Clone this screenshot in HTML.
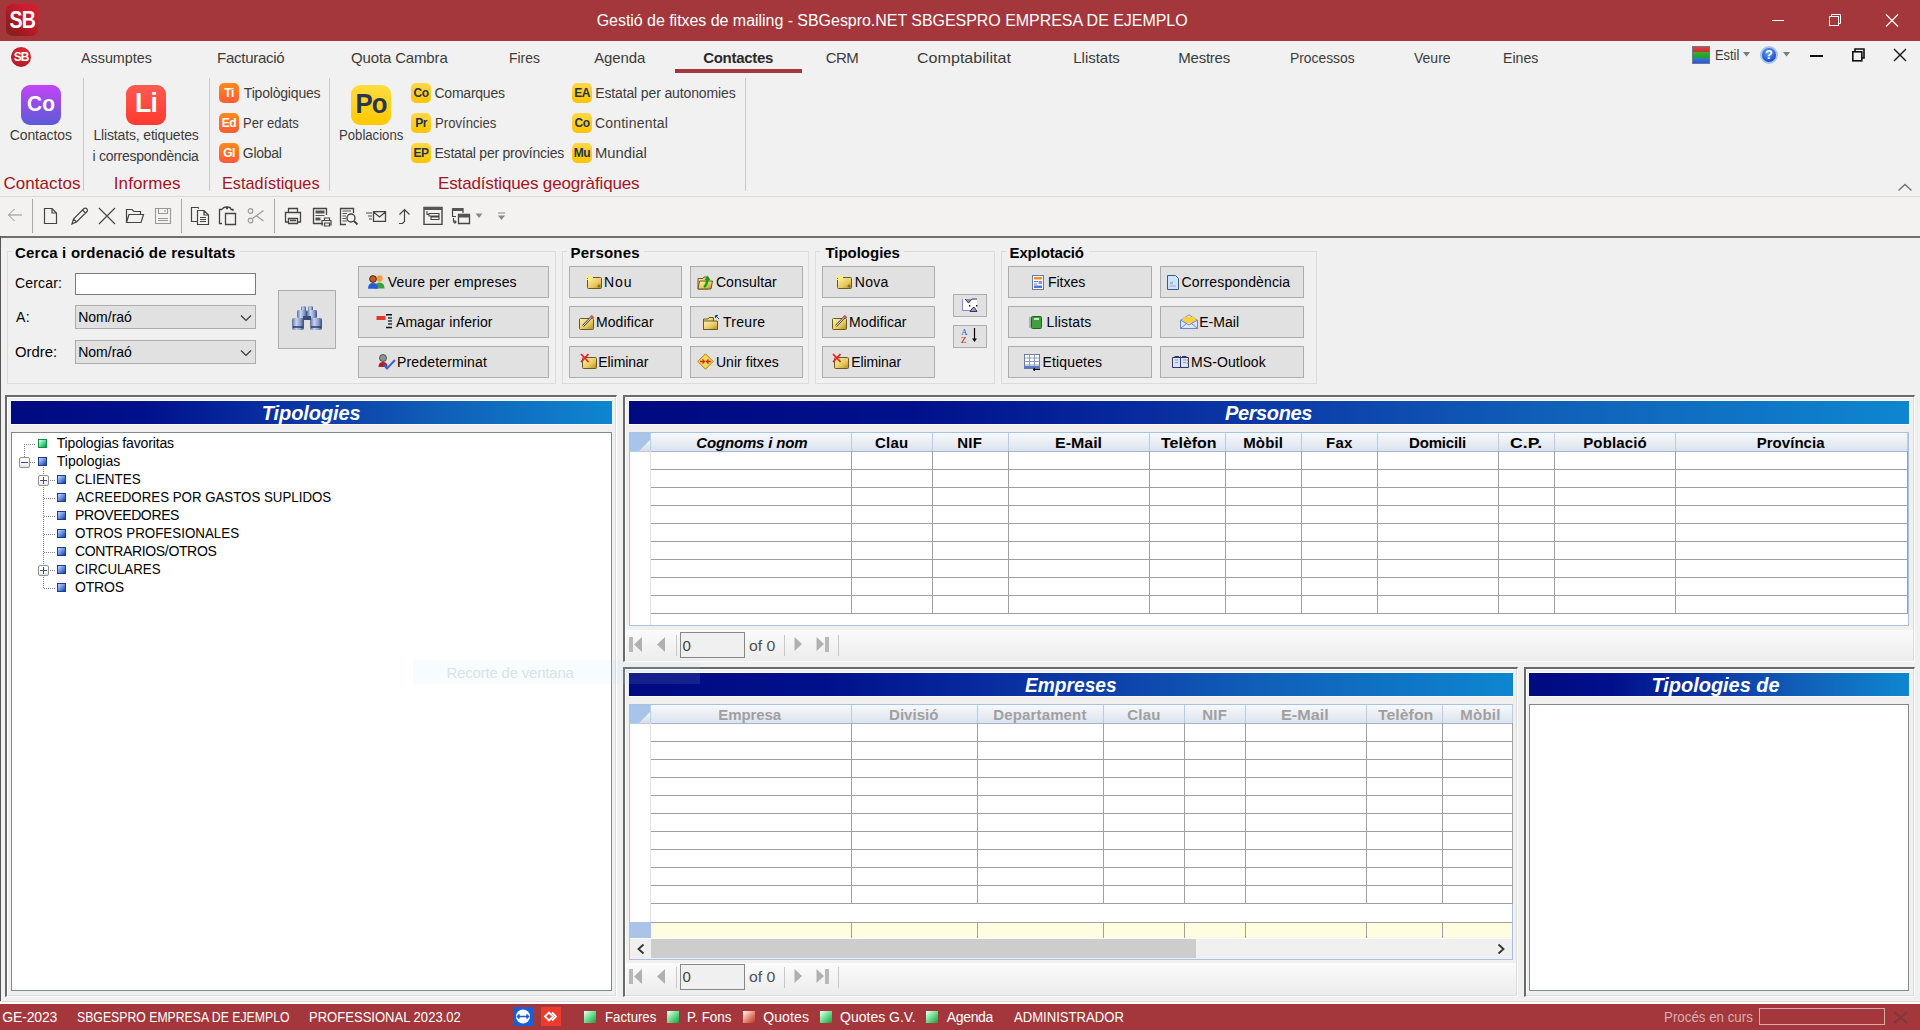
<!DOCTYPE html>
<html><head><meta charset="utf-8"><style>
html,body{margin:0;padding:0}
body{width:1920px;height:1030px;position:relative;overflow:hidden;background:#f0f0f0;font-family:"Liberation Sans",sans-serif}
.a{position:absolute;box-sizing:border-box}
.t{position:absolute;white-space:pre}
.ico{position:absolute;box-sizing:border-box;border-radius:5px;font-family:"Liberation Sans",sans-serif;font-weight:bold;text-align:center;white-space:pre}
</style></head>
<body>
<div class="a" style="left:0px;top:0px;width:1920px;height:41px;background:#a4373b"></div><div class="a" style="left:6px;top:4px;width:32px;height:32px;border-radius:7px;background:linear-gradient(45deg,#742818 0%,#a01a20 30%,#d01a2e 70%,#dc1a32 100%)"></div><div class="t" style="left:2px;top:8px;width:40px;font-size:24.5px;line-height:24px;font-weight:bold;color:#fff;letter-spacing:-1px;text-align:center;transform:scaleX(0.8);transform-origin:22px 0">SB</div><div class="a" style="left:1772px;top:20px;width:12px;height:1px;background:#fff"></div><svg class="a" style="left:1828px;top:13px" width="15" height="14" viewBox="0 0 15 14"><path d="M3.5 3.5V1.5H12.5V10.5H10.5" fill="none" stroke="#fff" stroke-width="1"/><rect x="1.5" y="3.5" width="9" height="9" fill="none" stroke="#fff" stroke-width="1"/></svg><svg class="a" style="left:1885px;top:14px" width="14" height="13" viewBox="0 0 14 13"><path d="M1 0.5L13 12.5M13 0.5L1 12.5" stroke="#fff" stroke-width="1.1"/></svg><div class="a" style="left:0px;top:41px;width:1920px;height:155px;background:#f1f1f1"></div><div class="a" style="left:11px;top:47px;width:20px;height:20px;border-radius:50%;background:radial-gradient(circle at 60% 30%,#e0283a,#a8141e)"></div><div class="t" style="left:11px;top:50px;width:20px;font-size:12px;line-height:14px;font-weight:bold;color:#fff;letter-spacing:-1px;text-align:center">SB</div><div class="a" style="left:675px;top:69px;width:127px;height:4px;background:#a4373b"></div><div class="a" style="left:1692px;top:46px;width:18px;height:18px;background:linear-gradient(#e04040 0,#c83030 33%,#30b030 33%,#20a020 66%,#3a7ae0 66%,#2a5ad0 100%);border:1px solid #6a7a8a"></div><svg class="a" style="left:1743px;top:52px" width="8" height="5" viewBox="0 0 8 5"><path d="M0 0H7L3.5 4.5Z" fill="#7a7a7a"/></svg><div class="a" style="left:1760px;top:46px;width:18px;height:18px;border-radius:50%;background:radial-gradient(circle at 45% 35%,#6aa8ff,#1a4ec8 70%);border:2px solid #a8c4ec"></div><div class="t" style="left:1760px;top:48px;width:18px;font-size:13px;line-height:14px;font-weight:bold;color:#fff;text-align:center">?</div><svg class="a" style="left:1783px;top:52px" width="8" height="5" viewBox="0 0 8 5"><path d="M0 0H7L3.5 4.5Z" fill="#7a7a7a"/></svg><div class="a" style="left:1810px;top:55px;width:13px;height:2px;background:#111"></div><svg class="a" style="left:1851px;top:48px" width="15" height="14" viewBox="0 0 15 14"><path d="M4 3V1H13V10H11" fill="none" stroke="#111" stroke-width="1.6"/><rect x="1.8" y="3.8" width="9" height="9" fill="none" stroke="#111" stroke-width="1.6"/></svg><svg class="a" style="left:1893px;top:48px" width="14" height="14" viewBox="0 0 14 14"><path d="M1 1L13 13M13 1L1 13" stroke="#111" stroke-width="1.4"/></svg><div class="a" style="left:83px;top:78px;width:1px;height:113px;background:#c8c8c8"></div><div class="a" style="left:209px;top:78px;width:1px;height:113px;background:#c8c8c8"></div><div class="a" style="left:329px;top:78px;width:1px;height:113px;background:#c8c8c8"></div><div class="a" style="left:745px;top:78px;width:1px;height:113px;background:#c8c8c8"></div><div class="a" style="left:0px;top:196px;width:1920px;height:1px;background:#d9d9d9"></div><div class="ico" style="left:21px;top:85px;width:40px;height:40px;border-radius:9px;background:linear-gradient(#c544f5,#5a5ad8)"></div><div class="t" style="left:21px;top:93.2px;width:40px;text-align:center;font-size:22px;line-height:22px;font-weight:bold;color:#fff;letter-spacing:0px;transform:scaleX(0.95);transform-origin:20px 0">Co</div><div class="ico" style="left:126px;top:85px;width:40px;height:40px;border-radius:9px;background:linear-gradient(#ff5a50,#ff3a30)"></div><div class="t" style="left:126px;top:88.8px;width:40px;text-align:center;font-size:28px;line-height:28px;font-weight:bold;color:#fff;letter-spacing:-1px;transform:scaleX(0.95);transform-origin:20px 0">Li</div><div class="ico" style="left:351px;top:85px;width:40px;height:40px;border-radius:9px;background:linear-gradient(#ffdc40,#ffc800)"></div><div class="t" style="left:351px;top:90.1px;width:40px;text-align:center;font-size:28px;line-height:28px;font-weight:bold;color:#2a3550;letter-spacing:-1px;transform:scaleX(0.92);transform-origin:20px 0">Po</div><div class="ico" style="left:219px;top:83px;width:20px;height:20px;border-radius:5px;background:linear-gradient(#ff8a1a,#ff5a38)"></div><div class="t" style="left:219px;top:86px;width:20px;text-align:center;font-size:12px;line-height:14px;font-weight:bold;color:#fff;letter-spacing:-0.5px">Ti</div><div class="ico" style="left:219px;top:113px;width:20px;height:20px;border-radius:5px;background:linear-gradient(#ff8a1a,#ff5a38)"></div><div class="t" style="left:219px;top:116px;width:20px;text-align:center;font-size:12px;line-height:14px;font-weight:bold;color:#fff;letter-spacing:-0.5px">Ed</div><div class="ico" style="left:219px;top:143px;width:20px;height:20px;border-radius:5px;background:linear-gradient(#ff8a1a,#ff5a38)"></div><div class="t" style="left:219px;top:146px;width:20px;text-align:center;font-size:12px;line-height:14px;font-weight:bold;color:#fff;letter-spacing:-0.5px">Gl</div><div class="ico" style="left:411px;top:83px;width:20px;height:20px;border-radius:5px;background:linear-gradient(#ffd84a,#ffc400)"></div><div class="t" style="left:411px;top:86px;width:20px;text-align:center;font-size:12px;line-height:14px;font-weight:bold;color:#26324d;letter-spacing:-0.5px">Co</div><div class="ico" style="left:411px;top:113px;width:20px;height:20px;border-radius:5px;background:linear-gradient(#ffd84a,#ffc400)"></div><div class="t" style="left:411px;top:116px;width:20px;text-align:center;font-size:12px;line-height:14px;font-weight:bold;color:#26324d;letter-spacing:-0.5px">Pr</div><div class="ico" style="left:411px;top:143px;width:20px;height:20px;border-radius:5px;background:linear-gradient(#ffd84a,#ffc400)"></div><div class="t" style="left:411px;top:146px;width:20px;text-align:center;font-size:12px;line-height:14px;font-weight:bold;color:#26324d;letter-spacing:-0.5px">EP</div><div class="ico" style="left:572px;top:83px;width:20px;height:20px;border-radius:5px;background:linear-gradient(#ffd84a,#ffc400)"></div><div class="t" style="left:572px;top:86px;width:20px;text-align:center;font-size:12px;line-height:14px;font-weight:bold;color:#26324d;letter-spacing:-0.5px">EA</div><div class="ico" style="left:572px;top:113px;width:20px;height:20px;border-radius:5px;background:linear-gradient(#ffd84a,#ffc400)"></div><div class="t" style="left:572px;top:116px;width:20px;text-align:center;font-size:12px;line-height:14px;font-weight:bold;color:#26324d;letter-spacing:-0.5px">Co</div><div class="ico" style="left:572px;top:143px;width:20px;height:20px;border-radius:5px;background:linear-gradient(#ffd84a,#ffc400)"></div><div class="t" style="left:572px;top:146px;width:20px;text-align:center;font-size:12px;line-height:14px;font-weight:bold;color:#26324d;letter-spacing:-0.5px">Mu</div><svg class="a" style="left:1897px;top:183px" width="16" height="9" viewBox="0 0 16 9"><path d="M1.5 7.5L8 1.5L14.5 7.5" fill="none" stroke="#707070" stroke-width="1.3"/></svg><div class="a" style="left:0px;top:197px;width:1920px;height:39px;background:#f3f2f1"></div><div class="a" style="left:32px;top:199px;width:1px;height:34px;background:#a8a8a8"></div><div class="a" style="left:181px;top:199px;width:1px;height:34px;background:#a8a8a8"></div><div class="a" style="left:274px;top:199px;width:1px;height:34px;background:#a8a8a8"></div><svg class="a" style="left:7px;top:208px" width="16" height="14" viewBox="0 0 16 14"><path d="M15 7H1.5M7.5 1L1.5 7L7.5 13" fill="none" stroke="#909090" stroke-width="1"/></svg><svg class="a" style="left:43px;top:207px" width="15" height="18" viewBox="0 0 15 18"><path d="M1.5 1.5H9L13.5 6V16.5H1.5Z M9 1.5V6H13.5" fill="none" stroke="#444" stroke-width="1.2"/></svg><svg class="a" style="left:70px;top:207px" width="19" height="19" viewBox="0 0 19 19"><path d="M2 17L3.5 12L14 1.5Q15.5 0.5 17 2Q18 3.5 17 4.5L6.5 15Z M12.5 3L15.5 6 M3.5 12L6.5 15" fill="none" stroke="#444" stroke-width="1.2"/></svg><svg class="a" style="left:98px;top:207px" width="18" height="18" viewBox="0 0 18 18"><path d="M1 1L17 17M17 1L1 17" stroke="#444" stroke-width="1.1"/></svg><svg class="a" style="left:125px;top:208px" width="20" height="16" viewBox="0 0 20 16"><path d="M1.5 14.5V1.5H7L9 3.5H15.5V6.5 M1.5 14.5L4 6.5H18.5L16 14.5Z" fill="none" stroke="#444" stroke-width="1.2"/></svg><svg class="a" style="left:154px;top:207px" width="18" height="18" viewBox="0 0 18 18"><path d="M1.5 1.5H16.5V16.5H1.5Z M4.5 1.5V6.5H13.5V1.5 M11 3V5 M4 11.5H14 M4 13.5H14" fill="none" stroke="#999" stroke-width="1.1"/></svg><svg class="a" style="left:190px;top:206px" width="20" height="20" viewBox="0 0 20 20"><path d="M7 15.5H1.5V1.5H8L9 2.5 M7.5 4.5H14L18.5 9V18.5H7.5Z M14 4.5V9H18.5 M10 11.5H16 M10 13.5H16 M10 15.5H16" fill="none" stroke="#444" stroke-width="1.2"/></svg><svg class="a" style="left:218px;top:206px" width="19" height="20" viewBox="0 0 19 20"><path d="M4 17.5H1.5V3.5H4 M4 3.5Q5 1 9 1Q13 1 13 3.5H15V5 M8 2.5H10 M7.5 7.5H17.5V18.5H7.5Z" fill="none" stroke="#444" stroke-width="1.3"/></svg><svg class="a" style="left:247px;top:208px" width="18" height="16" viewBox="0 0 18 16"><circle cx="3.5" cy="3" r="2.3" fill="none" stroke="#999" stroke-width="1.2"/><circle cx="3.5" cy="12.5" r="2.3" fill="none" stroke="#999" stroke-width="1.2"/><path d="M5.5 10.5L16.5 2.5 M9 7.5L16.5 13" stroke="#999" stroke-width="1.2"/></svg><svg class="a" style="left:284px;top:207px" width="18" height="18" viewBox="0 0 18 18"><path d="M4.5 5.5V1.5H13.5V5.5 M4.5 15H1.5V5.5H16.5V15H13.5 M4.5 11.5H13.5V16.5H4.5Z M6 13.5H12" fill="none" stroke="#444" stroke-width="1.3"/></svg><svg class="a" style="left:312px;top:207px" width="20" height="20" viewBox="0 0 20 20"><path d="M11 16.5H1.5V1.5H14.5V8" fill="none" stroke="#444" stroke-width="1.3"/><rect x="3.5" y="3.5" width="9" height="3" fill="#555"/><path d="M3.5 8.5H12.5" stroke="#555"/><rect x="3.5" y="10.5" width="5" height="3" fill="#555"/><path d="M12.5 13.5V11H17.5V13.5 M11 18H10V13.5H19V18H18 M12.5 16H17.5V19H12.5Z" fill="none" stroke="#444" stroke-width="1.2"/></svg><svg class="a" style="left:339px;top:207px" width="20" height="20" viewBox="0 0 20 20"><path d="M7 17.5H1.5V1.5H14.5V6" fill="none" stroke="#444" stroke-width="1.3"/><path d="M3.5 4H12 M3.5 6.5H8 M3.5 9H7 M3.5 11.5H7 M3.5 14H8" stroke="#555" stroke-width="1"/><circle cx="12" cy="11" r="4" fill="none" stroke="#444" stroke-width="1.4"/><path d="M15 14L18.5 17.5" stroke="#444" stroke-width="1.8"/></svg><svg class="a" style="left:366px;top:211px" width="21" height="11" viewBox="0 0 21 11"><path d="M0 2H6 M2 5H6 M3 8H6" stroke="#444" stroke-width="1"/><path d="M7.5 0.5H19.5V10.5H7.5Z M7.5 1L13.5 6L19.5 1" fill="none" stroke="#444" stroke-width="1.3"/></svg><svg class="a" style="left:398px;top:208px" width="15" height="17" viewBox="0 0 15 17"><path d="M1 15.5H4.5L6.5 13.5V2 M1.5 6.5L6.5 1.5L11.5 6.5" fill="none" stroke="#444" stroke-width="1.2"/></svg><svg class="a" style="left:423px;top:206px" width="20" height="19" viewBox="0 0 20 19"><path d="M1 1.5H19V18.5H1Z" fill="none" stroke="#444" stroke-width="1.4"/><rect x="1" y="1" width="18" height="3" fill="#555"/><path d="M4 5V8.5H6 M6 7.5H16V10H6Z M8 10.5V12.5 M8 11H16V13.5H8Z" fill="none" stroke="#444" stroke-width="1.1"/></svg><svg class="a" style="left:451px;top:207px" width="20" height="18" viewBox="0 0 20 18"><path d="M1.5 1.5H12V6 M1.5 1.5V9.5H5" fill="none" stroke="#444" stroke-width="1.2"/><rect x="1.5" y="1" width="10.5" height="3" fill="#555"/><path d="M7.5 7.5H18.5V16.5H7.5Z" fill="none" stroke="#444" stroke-width="1.3"/><rect x="7.5" y="7" width="11" height="3.5" fill="#555"/><path d="M2.5 11V15H5 M3.5 13.5L5 15L3.5 16.5" fill="none" stroke="#444" stroke-width="1.1"/></svg><svg class="a" style="left:475px;top:213px" width="8" height="6" viewBox="0 0 8 6"><path d="M0.5 0.5H7.5L4 5Z" fill="#888"/></svg><svg class="a" style="left:497px;top:212px" width="9" height="9" viewBox="0 0 9 9"><path d="M1 1H8" stroke="#888" stroke-width="1"/><path d="M1 3.5H8L4.5 8Z" fill="#888"/></svg><div class="a" style="left:0px;top:236px;width:1920px;height:2px;background:#6e6e6e"></div><div class="a" style="left:0px;top:236px;width:1px;height:765px;background:#555"></div><div class="a" style="left:7px;top:251px;width:549px;height:133px;border:1px solid #dcdcdc"></div><div class="a" style="left:12px;top:249px;width:228px;height:5px;background:#f0f0f0"></div><div class="a" style="left:562px;top:251px;width:247px;height:133px;border:1px solid #dcdcdc"></div><div class="a" style="left:567px;top:249px;width:77px;height:5px;background:#f0f0f0"></div><div class="a" style="left:815px;top:251px;width:180px;height:133px;border:1px solid #dcdcdc"></div><div class="a" style="left:820px;top:249px;width:84px;height:5px;background:#f0f0f0"></div><div class="a" style="left:1001px;top:251px;width:316px;height:133px;border:1px solid #dcdcdc"></div><div class="a" style="left:1006px;top:249px;width:83px;height:5px;background:#f0f0f0"></div><div class="a" style="left:75px;top:273px;width:181px;height:22px;background:#fff;border:1px solid #7a7a7a"></div><div class="a" style="left:75px;top:305px;width:181px;height:24px;background:#e1e1e1;border:1px solid #adadad"></div><svg class="a" style="left:240px;top:314px" width="12" height="8" viewBox="0 0 12 8"><path d="M1 1.5L6 6.5L11 1.5" fill="none" stroke="#333" stroke-width="1.1"/></svg><div class="a" style="left:75px;top:340px;width:181px;height:24px;background:#e1e1e1;border:1px solid #adadad"></div><svg class="a" style="left:240px;top:349px" width="12" height="8" viewBox="0 0 12 8"><path d="M1 1.5L6 6.5L11 1.5" fill="none" stroke="#333" stroke-width="1.1"/></svg><div class="a" style="left:278px;top:290px;width:58px;height:59px;background:#e1e1e1;border:1px solid #adadad"></div><div class="a" style="left:358px;top:266px;width:191px;height:32px;background:#e1e1e1;border:1px solid #adadad"></div><div class="a" style="left:569px;top:266px;width:113px;height:32px;background:#e1e1e1;border:1px solid #adadad"></div><div class="a" style="left:690px;top:266px;width:113px;height:32px;background:#e1e1e1;border:1px solid #adadad"></div><div class="a" style="left:822px;top:266px;width:113px;height:32px;background:#e1e1e1;border:1px solid #adadad"></div><div class="a" style="left:1008px;top:266px;width:144px;height:32px;background:#e1e1e1;border:1px solid #adadad"></div><div class="a" style="left:1160px;top:266px;width:144px;height:32px;background:#e1e1e1;border:1px solid #adadad"></div><div class="a" style="left:358px;top:306px;width:191px;height:32px;background:#e1e1e1;border:1px solid #adadad"></div><div class="a" style="left:569px;top:306px;width:113px;height:32px;background:#e1e1e1;border:1px solid #adadad"></div><div class="a" style="left:690px;top:306px;width:113px;height:32px;background:#e1e1e1;border:1px solid #adadad"></div><div class="a" style="left:822px;top:306px;width:113px;height:32px;background:#e1e1e1;border:1px solid #adadad"></div><div class="a" style="left:1008px;top:306px;width:144px;height:32px;background:#e1e1e1;border:1px solid #adadad"></div><div class="a" style="left:1160px;top:306px;width:144px;height:32px;background:#e1e1e1;border:1px solid #adadad"></div><div class="a" style="left:358px;top:346px;width:191px;height:32px;background:#e1e1e1;border:1px solid #adadad"></div><div class="a" style="left:569px;top:346px;width:113px;height:32px;background:#e1e1e1;border:1px solid #adadad"></div><div class="a" style="left:690px;top:346px;width:113px;height:32px;background:#e1e1e1;border:1px solid #adadad"></div><div class="a" style="left:822px;top:346px;width:113px;height:32px;background:#e1e1e1;border:1px solid #adadad"></div><div class="a" style="left:1008px;top:346px;width:144px;height:32px;background:#e1e1e1;border:1px solid #adadad"></div><div class="a" style="left:1160px;top:346px;width:144px;height:32px;background:#e1e1e1;border:1px solid #adadad"></div><div class="a" style="left:953px;top:294px;width:34px;height:23px;background:#e1e1e1;border:1px solid #adadad"></div><div class="a" style="left:953px;top:325px;width:34px;height:23px;background:#e1e1e1;border:1px solid #adadad"></div><div class="a" style="left:5px;top:395px;width:612px;height:602px;border-top:2px solid #6a6a6a;border-left:2px solid #6a6a6a;border-right:1px solid #fff;border-bottom:1px solid #fff"></div><div class="a" style="left:7px;top:397px;width:609px;height:599px;border-top:1px solid #fff;border-left:1px solid #fff;border-right:1px solid #dcdcdc;border-bottom:1px solid #dcdcdc"></div><div class="a" style="left:11px;top:400px;width:601px;height:25px;background:#fffaf0"></div><div class="a" style="left:11px;top:401px;width:601px;height:23px;background:linear-gradient(90deg,#000a80 0%,#00108c 22%,#0c3aa8 50%,#1060b8 72%,#0e86d0 100%)"></div><div class="a" style="left:11px;top:432px;width:601px;height:559px;background:#fff;border:1px solid #828790"></div><div class="a" style="left:623px;top:395px;width:1292px;height:267px;border-top:2px solid #6a6a6a;border-left:2px solid #6a6a6a;border-right:1px solid #fff;border-bottom:1px solid #fff"></div><div class="a" style="left:625px;top:397px;width:1289px;height:264px;border-top:1px solid #fff;border-left:1px solid #fff;border-right:1px solid #dcdcdc;border-bottom:1px solid #dcdcdc"></div><div class="a" style="left:629px;top:400px;width:1280px;height:25px;background:#fffaf0"></div><div class="a" style="left:629px;top:401px;width:1280px;height:23px;background:linear-gradient(90deg,#000a80 0%,#00108c 22%,#0c3aa8 50%,#1060b8 72%,#0e86d0 100%)"></div><div class="a" style="left:623px;top:667px;width:895px;height:330px;border-top:2px solid #6a6a6a;border-left:2px solid #6a6a6a;border-right:1px solid #fff;border-bottom:1px solid #fff"></div><div class="a" style="left:625px;top:669px;width:892px;height:327px;border-top:1px solid #fff;border-left:1px solid #fff;border-right:1px solid #dcdcdc;border-bottom:1px solid #dcdcdc"></div><div class="a" style="left:629px;top:672px;width:884px;height:25px;background:#fffaf0"></div><div class="a" style="left:629px;top:673px;width:884px;height:23px;background:linear-gradient(90deg,#000a80 0%,#00108c 22%,#0c3aa8 50%,#1060b8 72%,#0e86d0 100%)"></div><div class="a" style="left:1524px;top:667px;width:391px;height:330px;border-top:2px solid #6a6a6a;border-left:2px solid #6a6a6a;border-right:1px solid #fff;border-bottom:1px solid #fff"></div><div class="a" style="left:1526px;top:669px;width:388px;height:327px;border-top:1px solid #fff;border-left:1px solid #fff;border-right:1px solid #dcdcdc;border-bottom:1px solid #dcdcdc"></div><div class="a" style="left:1529px;top:672px;width:380px;height:25px;background:#fffaf0"></div><div class="a" style="left:1529px;top:673px;width:380px;height:23px;background:linear-gradient(90deg,#000a80 0%,#00108c 22%,#0c3aa8 50%,#1060b8 72%,#0e86d0 100%)"></div><div class="a" style="left:1529px;top:704px;width:380px;height:287px;background:#fff;border:1px solid #828790"></div><div class="a" style="left:629px;top:432px;width:1280px;height:194px;background:#fff;border:1px solid #a9c2e2"></div><div class="a" style="left:630px;top:433px;width:1278px;height:19px;background:linear-gradient(#f7f9fc,#dce3ed);border-bottom:1px solid #a0b6d0"></div><div class="a" style="left:630px;top:433px;width:21px;height:19px;background:#a8c4e8;border-right:1px solid #b4d0f6;border-bottom:1px solid #b0ccf2"></div><svg class="a" style="left:639px;top:440px" width="11" height="11" viewBox="0 0 11 11"><defs><linearGradient id="tg" x1="0" y1="0" x2="0" y2="1"><stop offset="0" stop-color="#f8f6f2"/><stop offset="1" stop-color="#dcdce0"/></linearGradient></defs><path d="M11 0V11H0Z" fill="url(#tg)"/></svg><div class="a" style="left:851px;top:433px;width:1px;height:18px;background:#b8cce6"></div><div class="a" style="left:932px;top:433px;width:1px;height:18px;background:#b8cce6"></div><div class="a" style="left:1008px;top:433px;width:1px;height:18px;background:#b8cce6"></div><div class="a" style="left:1149px;top:433px;width:1px;height:18px;background:#b8cce6"></div><div class="a" style="left:1225px;top:433px;width:1px;height:18px;background:#b8cce6"></div><div class="a" style="left:1301px;top:433px;width:1px;height:18px;background:#b8cce6"></div><div class="a" style="left:1377px;top:433px;width:1px;height:18px;background:#b8cce6"></div><div class="a" style="left:1498px;top:433px;width:1px;height:18px;background:#b8cce6"></div><div class="a" style="left:1554px;top:433px;width:1px;height:18px;background:#b8cce6"></div><div class="a" style="left:1675px;top:433px;width:1px;height:18px;background:#b8cce6"></div><div class="a" style="left:1907px;top:433px;width:1px;height:18px;background:#b8cce6"></div><div class="a" style="left:651px;top:469px;width:1257px;height:1px;background:#a0a0a0"></div><div class="a" style="left:651px;top:487px;width:1257px;height:1px;background:#a0a0a0"></div><div class="a" style="left:651px;top:505px;width:1257px;height:1px;background:#a0a0a0"></div><div class="a" style="left:651px;top:523px;width:1257px;height:1px;background:#a0a0a0"></div><div class="a" style="left:651px;top:541px;width:1257px;height:1px;background:#a0a0a0"></div><div class="a" style="left:651px;top:559px;width:1257px;height:1px;background:#a0a0a0"></div><div class="a" style="left:651px;top:577px;width:1257px;height:1px;background:#a0a0a0"></div><div class="a" style="left:651px;top:595px;width:1257px;height:1px;background:#a0a0a0"></div><div class="a" style="left:651px;top:613px;width:1257px;height:1px;background:#a0a0a0"></div><div class="a" style="left:851px;top:451px;width:1px;height:163px;background:#a0a0a0"></div><div class="a" style="left:932px;top:451px;width:1px;height:163px;background:#a0a0a0"></div><div class="a" style="left:1008px;top:451px;width:1px;height:163px;background:#a0a0a0"></div><div class="a" style="left:1149px;top:451px;width:1px;height:163px;background:#a0a0a0"></div><div class="a" style="left:1225px;top:451px;width:1px;height:163px;background:#a0a0a0"></div><div class="a" style="left:1301px;top:451px;width:1px;height:163px;background:#a0a0a0"></div><div class="a" style="left:1377px;top:451px;width:1px;height:163px;background:#a0a0a0"></div><div class="a" style="left:1498px;top:451px;width:1px;height:163px;background:#a0a0a0"></div><div class="a" style="left:1554px;top:451px;width:1px;height:163px;background:#a0a0a0"></div><div class="a" style="left:1675px;top:451px;width:1px;height:163px;background:#a0a0a0"></div><div class="a" style="left:1907px;top:451px;width:1px;height:163px;background:#a0a0a0"></div><div class="a" style="left:650px;top:451px;width:1px;height:174px;background:#e2e2e2"></div><div class="a" style="left:629px;top:704px;width:884px;height:256px;background:#fff;border:1px solid #a9c2e2"></div><div class="a" style="left:630px;top:705px;width:882px;height:19px;background:linear-gradient(#f7f9fc,#dce3ed);border-bottom:1px solid #a0b6d0"></div><div class="a" style="left:630px;top:705px;width:21px;height:19px;background:#a8c4e8;border-right:1px solid #b4d0f6;border-bottom:1px solid #b0ccf2"></div><svg class="a" style="left:639px;top:712px" width="11" height="11" viewBox="0 0 11 11"><defs><linearGradient id="tg" x1="0" y1="0" x2="0" y2="1"><stop offset="0" stop-color="#f8f6f2"/><stop offset="1" stop-color="#dcdce0"/></linearGradient></defs><path d="M11 0V11H0Z" fill="url(#tg)"/></svg><div class="a" style="left:851px;top:705px;width:1px;height:18px;background:#b8cce6"></div><div class="a" style="left:977px;top:705px;width:1px;height:18px;background:#b8cce6"></div><div class="a" style="left:1103px;top:705px;width:1px;height:18px;background:#b8cce6"></div><div class="a" style="left:1184px;top:705px;width:1px;height:18px;background:#b8cce6"></div><div class="a" style="left:1245px;top:705px;width:1px;height:18px;background:#b8cce6"></div><div class="a" style="left:1366px;top:705px;width:1px;height:18px;background:#b8cce6"></div><div class="a" style="left:1442px;top:705px;width:1px;height:18px;background:#b8cce6"></div><div class="a" style="left:1512px;top:705px;width:1px;height:18px;background:#b8cce6"></div><div class="a" style="left:651px;top:741px;width:862px;height:1px;background:#a0a0a0"></div><div class="a" style="left:651px;top:759px;width:862px;height:1px;background:#a0a0a0"></div><div class="a" style="left:651px;top:777px;width:862px;height:1px;background:#a0a0a0"></div><div class="a" style="left:651px;top:795px;width:862px;height:1px;background:#a0a0a0"></div><div class="a" style="left:651px;top:813px;width:862px;height:1px;background:#a0a0a0"></div><div class="a" style="left:651px;top:831px;width:862px;height:1px;background:#a0a0a0"></div><div class="a" style="left:651px;top:849px;width:862px;height:1px;background:#a0a0a0"></div><div class="a" style="left:651px;top:867px;width:862px;height:1px;background:#a0a0a0"></div><div class="a" style="left:651px;top:885px;width:862px;height:1px;background:#a0a0a0"></div><div class="a" style="left:651px;top:903px;width:862px;height:1px;background:#a0a0a0"></div><div class="a" style="left:851px;top:723px;width:1px;height:181px;background:#a0a0a0"></div><div class="a" style="left:977px;top:723px;width:1px;height:181px;background:#a0a0a0"></div><div class="a" style="left:1103px;top:723px;width:1px;height:181px;background:#a0a0a0"></div><div class="a" style="left:1184px;top:723px;width:1px;height:181px;background:#a0a0a0"></div><div class="a" style="left:1245px;top:723px;width:1px;height:181px;background:#a0a0a0"></div><div class="a" style="left:1366px;top:723px;width:1px;height:181px;background:#a0a0a0"></div><div class="a" style="left:1442px;top:723px;width:1px;height:181px;background:#a0a0a0"></div><div class="a" style="left:1512px;top:723px;width:1px;height:181px;background:#a0a0a0"></div><div class="a" style="left:650px;top:723px;width:1px;height:236px;background:#e2e2e2"></div><div class="a" style="left:651px;top:922px;width:861px;height:16px;background:#fffde0;border-top:1px solid #a0a0a0"></div><div class="a" style="left:851px;top:922px;width:1px;height:16px;background:#a0a0a0"></div><div class="a" style="left:977px;top:922px;width:1px;height:16px;background:#a0a0a0"></div><div class="a" style="left:1103px;top:922px;width:1px;height:16px;background:#a0a0a0"></div><div class="a" style="left:1184px;top:922px;width:1px;height:16px;background:#a0a0a0"></div><div class="a" style="left:1245px;top:922px;width:1px;height:16px;background:#a0a0a0"></div><div class="a" style="left:1366px;top:922px;width:1px;height:16px;background:#a0a0a0"></div><div class="a" style="left:1442px;top:922px;width:1px;height:16px;background:#a0a0a0"></div><div class="a" style="left:630px;top:922px;width:21px;height:16px;background:#a9c4e8"></div><div class="a" style="left:630px;top:938px;width:882px;height:21px;background:#f0f0f0;border-top:1px solid #fff"></div><div class="a" style="left:651px;top:939px;width:545px;height:19px;background:#cdcdcd"></div><svg class="a" style="left:636px;top:943px" width="10" height="12" viewBox="0 0 10 12"><path d="M7.5 1.5L2.5 6L7.5 10.5" fill="none" stroke="#333" stroke-width="1.8"/></svg><svg class="a" style="left:1496px;top:943px" width="10" height="12" viewBox="0 0 10 12"><path d="M2.5 1.5L7.5 6L2.5 10.5" fill="none" stroke="#333" stroke-width="1.8"/></svg><div class="a" style="left:626px;top:630px;width:1287px;height:31px;background:linear-gradient(#fbfbfb,#ececec)"></div><svg class="a" style="left:629px;top:637px" width="14" height="16" viewBox="0 0 14 16"><defs><linearGradient id="ng" x1="0" x2="1"><stop offset="0" stop-color="#c4c4c4"/><stop offset="1" stop-color="#a0a0a0"/></linearGradient></defs><rect x="0" y="0" width="4" height="15" fill="#b8b8b8"/><path d="M13 0V15L5 7.5Z" fill="#b0b0b0"/></svg><svg class="a" style="left:656px;top:637px" width="10" height="16" viewBox="0 0 10 16"><path d="M9 0V15L1 7.5Z" fill="#b0b0b0"/></svg><div class="a" style="left:676px;top:635px;width:1px;height:21px;background:#c8c8c8"></div><div class="a" style="left:680px;top:632px;width:65px;height:26px;background:#f0f0f0;border:1px solid #888"></div><div class="a" style="left:784px;top:635px;width:1px;height:21px;background:#c8c8c8"></div><svg class="a" style="left:794px;top:637px" width="9" height="16" viewBox="0 0 9 16"><path d="M0.5 0V14L8 7Z" fill="#b0b0b0"/></svg><svg class="a" style="left:816px;top:637px" width="14" height="16" viewBox="0 0 14 16"><path d="M0.5 0V14L8 7Z" fill="#b0b0b0"/><rect x="9" y="0" width="4" height="15" fill="#b8b8b8"/></svg><div class="a" style="left:838px;top:635px;width:1px;height:21px;background:#c8c8c8"></div><div class="a" style="left:626px;top:963px;width:890px;height:32px;background:linear-gradient(#fbfbfb,#ececec)"></div><svg class="a" style="left:629px;top:969px" width="14" height="16" viewBox="0 0 14 16"><defs><linearGradient id="ng" x1="0" x2="1"><stop offset="0" stop-color="#c4c4c4"/><stop offset="1" stop-color="#a0a0a0"/></linearGradient></defs><rect x="0" y="0" width="4" height="15" fill="#b8b8b8"/><path d="M13 0V15L5 7.5Z" fill="#b0b0b0"/></svg><svg class="a" style="left:656px;top:969px" width="10" height="16" viewBox="0 0 10 16"><path d="M9 0V15L1 7.5Z" fill="#b0b0b0"/></svg><div class="a" style="left:676px;top:967px;width:1px;height:21px;background:#c8c8c8"></div><div class="a" style="left:680px;top:964px;width:65px;height:26px;background:#f0f0f0;border:1px solid #888"></div><div class="a" style="left:784px;top:967px;width:1px;height:21px;background:#c8c8c8"></div><svg class="a" style="left:794px;top:969px" width="9" height="16" viewBox="0 0 9 16"><path d="M0.5 0V14L8 7Z" fill="#b0b0b0"/></svg><svg class="a" style="left:816px;top:969px" width="14" height="16" viewBox="0 0 14 16"><path d="M0.5 0V14L8 7Z" fill="#b0b0b0"/><rect x="9" y="0" width="4" height="15" fill="#b8b8b8"/></svg><div class="a" style="left:838px;top:967px;width:1px;height:21px;background:#c8c8c8"></div><div class="a" style="left:24px;top:444px;width:12px;height:1px;background:repeating-linear-gradient(90deg,#808080 0 1px,transparent 1px 2px)"></div><div class="a" style="left:24px;top:444px;width:1px;height:13px;background:repeating-linear-gradient(180deg,#808080 0 1px,transparent 1px 2px)"></div><div class="a" style="left:30px;top:462px;width:6px;height:1px;background:repeating-linear-gradient(90deg,#808080 0 1px,transparent 1px 2px)"></div><div class="a" style="left:19px;top:457px;width:11px;height:11px;background:linear-gradient(#fff 45%,#e4e4e4);border:1px solid #919191;border-radius:2px"></div><div class="a" style="left:21px;top:462px;width:7px;height:1px;background:#3a4c98"></div><div class="a" style="left:43px;top:467px;width:1px;height:122px;background:repeating-linear-gradient(180deg,#808080 0 1px,transparent 1px 2px)"></div><div class="a" style="left:44px;top:480px;width:11px;height:1px;background:repeating-linear-gradient(90deg,#808080 0 1px,transparent 1px 2px)"></div><div class="a" style="left:44px;top:498px;width:11px;height:1px;background:repeating-linear-gradient(90deg,#808080 0 1px,transparent 1px 2px)"></div><div class="a" style="left:44px;top:516px;width:11px;height:1px;background:repeating-linear-gradient(90deg,#808080 0 1px,transparent 1px 2px)"></div><div class="a" style="left:44px;top:534px;width:11px;height:1px;background:repeating-linear-gradient(90deg,#808080 0 1px,transparent 1px 2px)"></div><div class="a" style="left:44px;top:552px;width:11px;height:1px;background:repeating-linear-gradient(90deg,#808080 0 1px,transparent 1px 2px)"></div><div class="a" style="left:44px;top:570px;width:11px;height:1px;background:repeating-linear-gradient(90deg,#808080 0 1px,transparent 1px 2px)"></div><div class="a" style="left:44px;top:588px;width:11px;height:1px;background:repeating-linear-gradient(90deg,#808080 0 1px,transparent 1px 2px)"></div><div class="a" style="left:38px;top:475px;width:11px;height:11px;background:linear-gradient(#fff 45%,#e4e4e4);border:1px solid #919191;border-radius:2px"></div><div class="a" style="left:40px;top:480px;width:7px;height:1px;background:#3a4c98"></div><div class="a" style="left:43px;top:477px;width:1px;height:7px;background:#3a4c98"></div><div class="a" style="left:38px;top:565px;width:11px;height:11px;background:linear-gradient(#fff 45%,#e4e4e4);border:1px solid #919191;border-radius:2px"></div><div class="a" style="left:40px;top:570px;width:7px;height:1px;background:#3a4c98"></div><div class="a" style="left:43px;top:567px;width:1px;height:7px;background:#3a4c98"></div><div class="a" style="left:38px;top:439px;width:9px;height:9px;background:linear-gradient(135deg,#d8fff0 0%,#60d8a0 50%,#109040 100%);border:1px solid #109040"></div><div class="a" style="left:38px;top:457px;width:9px;height:9px;background:linear-gradient(135deg,#c8d8ff 0%,#6a90e0 50%,#1a3aa0 100%);border:1px solid #1a3aa0"></div><div class="a" style="left:57px;top:475px;width:9px;height:9px;background:linear-gradient(135deg,#c8d8ff 0%,#6a90e0 50%,#1a3aa0 100%);border:1px solid #1a3aa0"></div><div class="a" style="left:57px;top:493px;width:9px;height:9px;background:linear-gradient(135deg,#c8d8ff 0%,#6a90e0 50%,#1a3aa0 100%);border:1px solid #1a3aa0"></div><div class="a" style="left:57px;top:511px;width:9px;height:9px;background:linear-gradient(135deg,#c8d8ff 0%,#6a90e0 50%,#1a3aa0 100%);border:1px solid #1a3aa0"></div><div class="a" style="left:57px;top:529px;width:9px;height:9px;background:linear-gradient(135deg,#c8d8ff 0%,#6a90e0 50%,#1a3aa0 100%);border:1px solid #1a3aa0"></div><div class="a" style="left:57px;top:547px;width:9px;height:9px;background:linear-gradient(135deg,#c8d8ff 0%,#6a90e0 50%,#1a3aa0 100%);border:1px solid #1a3aa0"></div><div class="a" style="left:57px;top:565px;width:9px;height:9px;background:linear-gradient(135deg,#c8d8ff 0%,#6a90e0 50%,#1a3aa0 100%);border:1px solid #1a3aa0"></div><div class="a" style="left:57px;top:583px;width:9px;height:9px;background:linear-gradient(135deg,#c8d8ff 0%,#6a90e0 50%,#1a3aa0 100%);border:1px solid #1a3aa0"></div><div class="a" style="left:0px;top:1004px;width:1920px;height:26px;background:#a4373b"></div><div class="a" style="left:2px;top:997px;width:1918px;height:4px;background:#f0f0f0"></div><div class="a" style="left:0px;top:1001px;width:1920px;height:1px;background:#dcdcdc"></div><div class="a" style="left:0px;top:1002px;width:1920px;height:2px;background:#fff"></div><div class="a" style="left:513px;top:1007px;width:20px;height:19px;background:#1560d8"></div><svg class="a" style="left:513px;top:1007px" width="20" height="19" viewBox="0 0 20 19"><circle cx="10" cy="9.5" r="7" fill="#fff"/><path d="M4.5 9.5H15.5 M6.5 7.5L4.5 9.5L6.5 11.5 M13.5 7.5L15.5 9.5L13.5 11.5" fill="none" stroke="#1560d8" stroke-width="1.6"/></svg><div class="a" style="left:541px;top:1007px;width:20px;height:19px;background:#ef3b2d"></div><svg class="a" style="left:541px;top:1007px" width="20" height="19" viewBox="0 0 20 19"><path d="M4 9.5L8 5.5L12 9.5L8 13.5Z M11 5.5L15 9.5L11 13.5" fill="none" stroke="#fff" stroke-width="1.8"/></svg><div class="a" style="left:584px;top:1011px;width:12px;height:12px;background:linear-gradient(135deg,#fff 0%,#7ee8a0 40%,#1a9a40 100%)"></div><div class="a" style="left:667px;top:1011px;width:12px;height:12px;background:linear-gradient(135deg,#fff 0%,#7ee8a0 40%,#1a9a40 100%)"></div><div class="a" style="left:820px;top:1011px;width:12px;height:12px;background:linear-gradient(135deg,#fff 0%,#7ee8a0 40%,#1a9a40 100%)"></div><div class="a" style="left:926px;top:1011px;width:12px;height:12px;background:linear-gradient(135deg,#fff 0%,#7ee8a0 40%,#1a9a40 100%)"></div><div class="a" style="left:743px;top:1011px;width:12px;height:12px;background:linear-gradient(135deg,#fff 0%,#f0a090 40%,#b83020 100%)"></div><div class="a" style="left:1759px;top:1008px;width:126px;height:17px;border:1px solid #d8a8aa"></div><svg class="a" style="left:1893px;top:1011px" width="15" height="13" viewBox="0 0 15 13"><path d="M1 1L14 12M14 1L1 12" stroke="#7a3a3c" stroke-width="2"/></svg><svg class="a" style="left:292px;top:306px" width="30" height="25" viewBox="0 0 30 25"><defs><linearGradient id="bn" x1="0" x2="1"><stop offset="0" stop-color="#5a6c98"/><stop offset="0.35" stop-color="#c8d4f0"/><stop offset="0.7" stop-color="#8aa0d0"/><stop offset="1" stop-color="#3a4a78"/></linearGradient></defs><rect x="9" y="0" width="5" height="5" rx="1.5" fill="url(#bn)"/><rect x="16" y="0" width="5" height="5" rx="1.5" fill="url(#bn)"/><rect x="5" y="4" width="10" height="8" rx="1.5" fill="url(#bn)"/><rect x="15" y="4" width="10" height="8" rx="1.5" fill="url(#bn)"/><rect x="0" y="12" width="12" height="12" rx="2" fill="url(#bn)"/><rect x="18" y="12" width="12" height="12" rx="2" fill="url(#bn)"/><rect x="11" y="10" width="8" height="4" fill="#3a4a78"/><path d="M1 21H11 M19 21H29" stroke="#2a3a68" stroke-width="1.5"/></svg><svg class="a" style="left:368px;top:275px" width="17" height="14" viewBox="0 0 17 14"><circle cx="11.5" cy="3.5" r="3.2" fill="#f0a040"/><path d="M6.5 13.5Q6.5 7.5 11.5 7.5Q16.5 7.5 16.5 13.5Z" fill="#3aa040"/><circle cx="5" cy="4" r="3.4" fill="#d05818" stroke="#202020" stroke-width="0.8"/><path d="M0 13.8Q0 8 5 8Q10 8 10 13.8Z" fill="#2a5ad8"/></svg><svg class="a" style="left:376px;top:314px" width="17" height="15" viewBox="0 0 17 15"><rect x="0.5" y="2" width="9" height="4" fill="#e03a2a"/><path d="M10 0.8H16 M12 4H16 M12 7H16 M12 10H16 M10 13.5H16" stroke="#111" stroke-width="1.4"/><path d="M12 4H16 M12 7H16 M12 10H16" stroke="#6a7aa0" stroke-width="1.2"/></svg><svg class="a" style="left:378px;top:354px" width="18" height="16" viewBox="0 0 18 16"><circle cx="5" cy="4" r="3.5" fill="#909090" stroke="#404040" stroke-width="0.8"/><path d="M0.5 13Q0.5 8 5 8Q9.5 8 9.5 13Z" fill="#b02028"/><path d="M6 11L9 14.5L17 6" fill="none" stroke="#3a64d0" stroke-width="2"/></svg><svg class="a" style="left:586px;top:274px" width="17" height="16" viewBox="0 0 17 16"><defs><linearGradient id="fy" x1="0" y1="0" x2="1" y2="1"><stop offset="0" stop-color="#fff4b0"/><stop offset="0.6" stop-color="#e8c860"/><stop offset="1" stop-color="#b08a20"/></linearGradient></defs><rect x="1.5" y="3.5" width="14" height="11" rx="1" fill="url(#fy)" stroke="#6a5a20" stroke-width="1"/><circle cx="13" cy="12" r="1" fill="none" stroke="#5a4a20" stroke-width="0.7"/><path d="M3.5 0V7 M0 3.5H7 M1 1L6 6 M6 1L1 6" stroke="#fff060" stroke-width="1"/></svg><svg class="a" style="left:836px;top:274px" width="17" height="16" viewBox="0 0 17 16"><defs><linearGradient id="fy" x1="0" y1="0" x2="1" y2="1"><stop offset="0" stop-color="#fff4b0"/><stop offset="0.6" stop-color="#e8c860"/><stop offset="1" stop-color="#b08a20"/></linearGradient></defs><rect x="1.5" y="3.5" width="14" height="11" rx="1" fill="url(#fy)" stroke="#6a5a20" stroke-width="1"/><circle cx="13" cy="12" r="1" fill="none" stroke="#5a4a20" stroke-width="0.7"/><path d="M3.5 0V7 M0 3.5H7 M1 1L6 6 M6 1L1 6" stroke="#fff060" stroke-width="1"/></svg><svg class="a" style="left:579px;top:315px" width="16" height="15" viewBox="0 0 16 15"><defs><linearGradient id="fy" x1="0" y1="0" x2="1" y2="1"><stop offset="0" stop-color="#fff4b0"/><stop offset="0.6" stop-color="#e8c860"/><stop offset="1" stop-color="#b08a20"/></linearGradient></defs><rect x="0.5" y="3.5" width="14" height="11" rx="1" fill="url(#fy)" stroke="#6a5a20" stroke-width="1"/><path d="M4 11L13 1.5" stroke="#404040" stroke-width="2.2"/><path d="M4 11L13 1.5" stroke="#f0f0f0" stroke-width="1"/><path d="M12 0.5L14.5 3" stroke="#d05050" stroke-width="2"/></svg><svg class="a" style="left:832px;top:315px" width="16" height="15" viewBox="0 0 16 15"><defs><linearGradient id="fy" x1="0" y1="0" x2="1" y2="1"><stop offset="0" stop-color="#fff4b0"/><stop offset="0.6" stop-color="#e8c860"/><stop offset="1" stop-color="#b08a20"/></linearGradient></defs><rect x="0.5" y="3.5" width="14" height="11" rx="1" fill="url(#fy)" stroke="#6a5a20" stroke-width="1"/><path d="M4 11L13 1.5" stroke="#404040" stroke-width="2.2"/><path d="M4 11L13 1.5" stroke="#f0f0f0" stroke-width="1"/><path d="M12 0.5L14.5 3" stroke="#d05050" stroke-width="2"/></svg><svg class="a" style="left:580px;top:353px" width="17" height="17" viewBox="0 0 17 17"><defs><linearGradient id="fy" x1="0" y1="0" x2="1" y2="1"><stop offset="0" stop-color="#fff4b0"/><stop offset="0.6" stop-color="#e8c860"/><stop offset="1" stop-color="#b08a20"/></linearGradient></defs><rect x="2.5" y="4.5" width="14" height="11" rx="1" fill="url(#fy)" stroke="#6a5a20" stroke-width="1"/><path d="M1 1L8.5 9 M8.5 1L1 9" stroke="#f02020" stroke-width="1.8"/></svg><svg class="a" style="left:832px;top:353px" width="17" height="17" viewBox="0 0 17 17"><defs><linearGradient id="fy" x1="0" y1="0" x2="1" y2="1"><stop offset="0" stop-color="#fff4b0"/><stop offset="0.6" stop-color="#e8c860"/><stop offset="1" stop-color="#b08a20"/></linearGradient></defs><rect x="2.5" y="4.5" width="14" height="11" rx="1" fill="url(#fy)" stroke="#6a5a20" stroke-width="1"/><path d="M1 1L8.5 9 M8.5 1L1 9" stroke="#f02020" stroke-width="1.8"/></svg><svg class="a" style="left:697px;top:274px" width="17" height="16" viewBox="0 0 17 16"><defs><linearGradient id="fy" x1="0" y1="0" x2="1" y2="1"><stop offset="0" stop-color="#fff4b0"/><stop offset="0.6" stop-color="#e8c860"/><stop offset="1" stop-color="#b08a20"/></linearGradient></defs><path d="M1 4.5H6L7 3H11V15H1Z" fill="url(#fy)" stroke="#6a5a20" stroke-width="1"/><path d="M1 15L2.5 7H15.5L14 15Z" fill="url(#fy)" stroke="#6a5a20" stroke-width="1"/><path d="M7 13Q10 11 10.5 5" fill="none" stroke="#10a020" stroke-width="2.5"/><path d="M7.5 6L10.5 1.5L13.5 6Z" fill="#10a020"/></svg><svg class="a" style="left:703px;top:314px" width="17" height="16" viewBox="0 0 17 16"><defs><linearGradient id="fy" x1="0" y1="0" x2="1" y2="1"><stop offset="0" stop-color="#fff4b0"/><stop offset="0.6" stop-color="#e8c860"/><stop offset="1" stop-color="#b08a20"/></linearGradient></defs><path d="M0.5 5H5L6 3.5H10.5V15.5H0.5Z" fill="url(#fy)" stroke="#6a5a20" stroke-width="1"/><path d="M0.5 15.5V7H14.5V15.5Z" fill="url(#fy)" stroke="#6a5a20" stroke-width="1"/><path d="M16 5L12.5 1.5 M12.5 1.5V4 M12.5 1.5H15" stroke="#203a90" stroke-width="1"/></svg><svg class="a" style="left:697px;top:353px" width="17" height="17" viewBox="0 0 17 17"><path d="M8.5 0.8L16.2 8.5L8.5 16.2L0.8 8.5Z" fill="#f8d850" stroke="#a08020" stroke-width="1"/><path d="M3 8.5H7 M10 8.5H14" stroke="#e02020" stroke-width="1.6"/><path d="M5.5 6.5L7.5 8.5L5.5 10.5 M11.5 6.5L9.5 8.5L11.5 10.5" fill="none" stroke="#e02020" stroke-width="1.2"/></svg><svg class="a" style="left:962px;top:298px" width="16" height="14" viewBox="0 0 16 14"><path d="M0.5 1V12.5H9" fill="none" stroke="#8a8ad0" stroke-width="1"/><rect x="1" y="1" width="14" height="11" fill="#fff"/><path d="M3 1L6.5 5L10 1" fill="#909090" stroke="#30307a" stroke-width="1"/><path d="M8 13.5L11 9.5H12.5L15 13.5Z" fill="#a0a0a0" stroke="#30307a" stroke-width="1"/><path d="M10 1H15" stroke="#5a7a9a" stroke-width="1.5"/><rect x="7" y="7" width="1.4" height="1.6" fill="#222"/><rect x="14" y="7" width="1.4" height="1.6" fill="#222"/></svg><svg class="a" style="left:961px;top:327px" width="16" height="17" viewBox="0 0 16 17"><text x="0" y="7.5" font-family="Liberation Serif" font-size="9" fill="#2a4ac0">A</text><text x="0" y="16" font-family="Liberation Serif" font-size="9" fill="#b02020">Z</text><path d="M13.5 1V14" stroke="#000" stroke-width="1.2"/><path d="M11 11.5L13.5 15L16 11.5Z" fill="#000"/></svg><svg class="a" style="left:1032px;top:275px" width="12" height="15" viewBox="0 0 12 15"><rect x="0.5" y="0.5" width="11" height="14" fill="#fff" stroke="#6a7aa0"/><rect x="2" y="2" width="8" height="2.5" fill="#ff8a20"/><path d="M2 6.5H6 M2 9H5" stroke="#5a7ac8" stroke-width="1.2"/><rect x="6.5" y="6" width="3.5" height="3" fill="#7a9ae0"/><rect x="2" y="10.5" width="8" height="2.5" fill="#4a7ad8"/></svg><svg class="a" style="left:1167px;top:275px" width="12" height="15" viewBox="0 0 12 15"><path d="M0.5 0.5H8.5L11.5 3.5V14.5H0.5Z" fill="#cfe4fa" stroke="#3a5a90"/><path d="M3 7L6 9M6 7L3 9 M2.5 11H9" stroke="#8aa0c0" stroke-width="0.8"/></svg><svg class="a" style="left:1029px;top:316px" width="13" height="13" viewBox="0 0 13 13"><rect x="2.5" y="0.5" width="10" height="12" rx="1" fill="#40a040" stroke="#206020"/><rect x="5" y="2" width="5" height="2" fill="#c0e8c0"/><path d="M1 1.5V12" stroke="#606060" stroke-width="1.5" stroke-dasharray="1 1"/></svg><svg class="a" style="left:1180px;top:314px" width="18" height="15" viewBox="0 0 18 15"><path d="M1 6L9 0.8L17 6" fill="#f8e0a0" stroke="#8a94c0" stroke-width="1"/><rect x="3" y="3" width="12" height="6" fill="#f8d040"/><path d="M0.5 6V14.5H17.5V6L9 11Z" fill="#dce8fa" stroke="#6a84c8" stroke-width="1"/><path d="M0.5 14.5L7 9 M17.5 14.5L11 9" stroke="#6a84c8" stroke-width="1"/></svg><svg class="a" style="left:1024px;top:354px" width="17" height="17" viewBox="0 0 17 17"><rect x="0.5" y="0.5" width="15" height="14" fill="#fff" stroke="#6a7a9a"/><path d="M0.5 4H15.5 M0.5 7.5H15.5 M0.5 11H15.5 M5.5 0.5V14.5 M10.5 0.5V14.5" stroke="#8a9ac0" stroke-width="1"/><rect x="0.5" y="12" width="15" height="2.5" fill="#5a7ac8"/><path d="M9 15.5H16 M11 14L9 15.5L11 17" stroke="#000" stroke-width="1" fill="none"/></svg><svg class="a" style="left:1172px;top:355px" width="17" height="13" viewBox="0 0 17 13"><path d="M0.5 2.5H16.5V12.5H0.5Z" fill="#dce4f4" stroke="#2a3a6a"/><path d="M8.5 1V12.5" stroke="#2a3a6a"/><path d="M2.5 1.5H7 M10 1.5H14.5" stroke="#2a3a6a"/><path d="M3 5H6 M3 7.5H6 M11 5H14 M11 7.5H14" stroke="#7a8ac0" stroke-width="0.8"/><path d="M15.5 4V6 M15.5 7V9" stroke="#e0a020" stroke-width="1.5"/></svg>
<div class="t" style="left:596.7px;top:12.7px;font-size:16px;line-height:16px;color:#ffffff;letter-spacing:-0.04px">Gestió de fitxes de mailing - SBGespro.NET SBGESPRO EMPRESA DE EJEMPLO</div>
<div class="t" style="left:81.2px;top:50.0px;font-size:15px;line-height:15px;color:#3b3b3b;transform:scaleX(0.9554);transform-origin:0 0">Assumptes</div>
<div class="t" style="left:217.0px;top:50.0px;font-size:15px;line-height:15px;color:#3b3b3b;letter-spacing:-0.26px">Facturació</div>
<div class="t" style="left:351.0px;top:50.0px;font-size:15px;line-height:15px;color:#3b3b3b;letter-spacing:-0.15px">Quota Cambra</div>
<div class="t" style="left:509.3px;top:50.0px;font-size:15px;line-height:15px;color:#3b3b3b;transform:scaleX(0.9250);transform-origin:0 0">Fires</div>
<div class="t" style="left:594.2px;top:50.0px;font-size:15px;line-height:15px;color:#3b3b3b;letter-spacing:-0.12px">Agenda</div>
<div class="t" style="left:703.2px;top:50.0px;font-size:15px;line-height:15px;color:#2b2b2b;font-weight:bold;letter-spacing:-0.28px">Contactes</div>
<div class="t" style="left:825.8px;top:50.0px;font-size:15px;line-height:15px;color:#3b3b3b;letter-spacing:-0.60px">CRM</div>
<div class="t" style="left:916.9px;top:50.0px;font-size:15px;line-height:15px;color:#3b3b3b;transform:scaleX(1.0721);transform-origin:0 0">Comptabilitat</div>
<div class="t" style="left:1073.3px;top:50.0px;font-size:15px;line-height:15px;color:#3b3b3b;letter-spacing:-0.03px">Llistats</div>
<div class="t" style="left:1178.3px;top:50.0px;font-size:15px;line-height:15px;color:#3b3b3b;letter-spacing:-0.25px">Mestres</div>
<div class="t" style="left:1290.4px;top:50.0px;font-size:15px;line-height:15px;color:#3b3b3b;transform:scaleX(0.9232);transform-origin:0 0">Processos</div>
<div class="t" style="left:1414.2px;top:50.0px;font-size:15px;line-height:15px;color:#3b3b3b;transform:scaleX(0.9333);transform-origin:0 0">Veure</div>
<div class="t" style="left:1503.1px;top:50.0px;font-size:15px;line-height:15px;color:#3b3b3b;transform:scaleX(0.9417);transform-origin:0 0">Eines</div>
<div class="t" style="left:1714.7px;top:47.8px;font-size:14px;line-height:14px;color:#3b3b3b;transform:scaleX(0.9160);transform-origin:0 0">Estil</div>
<div class="t" style="left:9.7px;top:128.0px;font-size:14px;line-height:14px;color:#3c3c3c;letter-spacing:-0.09px">Contactos</div>
<div class="t" style="left:93.4px;top:127.7px;font-size:14px;line-height:14px;color:#3c3c3c;letter-spacing:-0.15px">Llistats, etiquetes</div>
<div class="t" style="left:92.4px;top:148.6px;font-size:14px;line-height:14px;color:#3c3c3c;letter-spacing:-0.25px">i correspondència</div>
<div class="t" style="left:243.8px;top:85.7px;font-size:14px;line-height:14px;color:#3c3c3c;letter-spacing:-0.19px">Tipològiques</div>
<div class="t" style="left:242.9px;top:116.0px;font-size:14px;line-height:14px;color:#3c3c3c;transform:scaleX(0.9305);transform-origin:0 0">Per edats</div>
<div class="t" style="left:242.8px;top:145.9px;font-size:14px;line-height:14px;color:#3c3c3c;letter-spacing:-0.30px">Global</div>
<div class="t" style="left:339.0px;top:128.0px;font-size:14px;line-height:14px;color:#3c3c3c;transform:scaleX(0.9388);transform-origin:0 0">Poblacions</div>
<div class="t" style="left:434.5px;top:85.7px;font-size:14px;line-height:14px;color:#3c3c3c;letter-spacing:-0.24px">Comarques</div>
<div class="t" style="left:434.6px;top:116.0px;font-size:14px;line-height:14px;color:#3c3c3c;transform:scaleX(0.9375);transform-origin:0 0">Províncies</div>
<div class="t" style="left:434.5px;top:146.0px;font-size:14px;line-height:14px;color:#3c3c3c;letter-spacing:-0.23px">Estatal per províncies</div>
<div class="t" style="left:595.2px;top:85.7px;font-size:14px;line-height:14px;color:#3c3c3c;letter-spacing:-0.13px">Estatal per autonomies</div>
<div class="t" style="left:595.0px;top:116.0px;font-size:14px;line-height:14px;color:#3c3c3c;letter-spacing:0.20px">Continental</div>
<div class="t" style="left:594.9px;top:146.0px;font-size:14px;line-height:14px;color:#3c3c3c;transform:scaleX(1.0585);transform-origin:0 0">Mundial</div>
<div class="t" style="left:3.4px;top:174.9px;font-size:17px;line-height:17px;color:#a2141e;letter-spacing:0.07px">Contactos</div>
<div class="t" style="left:113.8px;top:174.9px;font-size:17px;line-height:17px;color:#a2141e;letter-spacing:0.09px">Informes</div>
<div class="t" style="left:222.0px;top:174.6px;font-size:17px;line-height:17px;color:#a2141e;transform:scaleX(0.9554);transform-origin:0 0">Estadístiques</div>
<div class="t" style="left:438.0px;top:174.6px;font-size:17px;line-height:17px;color:#a2141e;letter-spacing:-0.14px">Estadístiques geogràfiques</div>
<div class="t" style="left:15.0px;top:245.4px;font-size:15px;line-height:15px;color:#000000;font-weight:bold;letter-spacing:0.21px">Cerca i ordenació de resultats</div>
<div class="t" style="left:15.0px;top:276.0px;font-size:14px;line-height:14px;color:#000000;letter-spacing:0.17px">Cercar:</div>
<div class="t" style="left:16.0px;top:309.6px;font-size:14px;line-height:14px;color:#000000;letter-spacing:0.40px">A:</div>
<div class="t" style="left:14.9px;top:344.7px;font-size:14px;line-height:14px;color:#000000;transform:scaleX(1.0632);transform-origin:0 0">Ordre:</div>
<div class="t" style="left:78.2px;top:309.6px;font-size:14px;line-height:14px;color:#000000">Nom/raó</div>
<div class="t" style="left:78.2px;top:344.7px;font-size:14px;line-height:14px;color:#000000">Nom/raó</div>
<div class="t" style="left:387.8px;top:275.4px;font-size:14px;line-height:14px;color:#000000;letter-spacing:0.16px">Veure per empreses</div>
<div class="t" style="left:396.0px;top:315.0px;font-size:14px;line-height:14px;color:#000000;letter-spacing:0.05px">Amagar inferior</div>
<div class="t" style="left:397.0px;top:355.0px;font-size:14px;line-height:14px;color:#000000;letter-spacing:0.16px">Predeterminat</div>
<div class="t" style="left:570.6px;top:245.1px;font-size:15px;line-height:15px;color:#000000;font-weight:bold;letter-spacing:0.20px">Persones</div>
<div class="t" style="left:604.0px;top:275.0px;font-size:14px;line-height:14px;color:#000000;letter-spacing:0.95px">Nou</div>
<div class="t" style="left:715.9px;top:275.0px;font-size:14px;line-height:14px;color:#000000;letter-spacing:0.12px">Consultar</div>
<div class="t" style="left:595.9px;top:314.8px;font-size:14px;line-height:14px;color:#000000;letter-spacing:0.11px">Modificar</div>
<div class="t" style="left:723.0px;top:314.8px;font-size:14px;line-height:14px;color:#000000;letter-spacing:0.28px">Treure</div>
<div class="t" style="left:598.2px;top:354.6px;font-size:14px;line-height:14px;color:#000000;letter-spacing:-0.04px">Eliminar</div>
<div class="t" style="left:715.9px;top:354.6px;font-size:14px;line-height:14px;color:#000000;letter-spacing:0.06px">Unir fitxes</div>
<div class="t" style="left:825.4px;top:245.1px;font-size:15px;line-height:15px;color:#000000;font-weight:bold;letter-spacing:-0.02px">Tipologies</div>
<div class="t" style="left:854.8px;top:275.0px;font-size:14px;line-height:14px;color:#000000;letter-spacing:0.27px">Nova</div>
<div class="t" style="left:849.0px;top:314.8px;font-size:14px;line-height:14px;color:#000000;letter-spacing:0.09px">Modificar</div>
<div class="t" style="left:851.3px;top:354.6px;font-size:14px;line-height:14px;color:#000000;letter-spacing:-0.11px">Eliminar</div>
<div class="t" style="left:1009.6px;top:245.1px;font-size:15px;line-height:15px;color:#000000;font-weight:bold;letter-spacing:-0.16px">Explotació</div>
<div class="t" style="left:1048.0px;top:275.0px;font-size:14px;line-height:14px;color:#000000;letter-spacing:-0.02px">Fitxes</div>
<div class="t" style="left:1181.6px;top:275.0px;font-size:14px;line-height:14px;color:#000000;letter-spacing:0.13px">Correspondència</div>
<div class="t" style="left:1046.4px;top:314.8px;font-size:14px;line-height:14px;color:#000000;letter-spacing:0.20px">Llistats</div>
<div class="t" style="left:1199.2px;top:314.8px;font-size:14px;line-height:14px;color:#000000;letter-spacing:0.04px">E-Mail</div>
<div class="t" style="left:1042.4px;top:354.6px;font-size:14px;line-height:14px;color:#000000;letter-spacing:0.17px">Etiquetes</div>
<div class="t" style="left:1191.0px;top:354.6px;font-size:14px;line-height:14px;color:#000000;letter-spacing:0.09px">MS-Outlook</div>
<div class="t" style="left:261.8px;top:402.9px;font-size:20px;line-height:20px;color:#ffffff;font-weight:bold;font-style:italic;letter-spacing:-0.09px">Tipologies</div>
<div class="t" style="left:1225.0px;top:402.9px;font-size:20px;line-height:20px;color:#ffffff;font-weight:bold;font-style:italic;letter-spacing:-0.39px">Persones</div>
<div class="t" style="left:1025.0px;top:674.9px;font-size:20px;line-height:20px;color:#ffffff;font-weight:bold;font-style:italic;transform:scaleX(0.9579);transform-origin:0 0">Empreses</div>
<div class="t" style="left:1651.5px;top:674.9px;font-size:20px;line-height:20px;color:#ffffff;font-weight:bold;font-style:italic;letter-spacing:-0.04px">Tipologies de</div>
<div class="t" style="left:56.7px;top:436.3px;font-size:14px;line-height:14px;color:#000000;letter-spacing:-0.14px">Tipologias favoritas</div>
<div class="t" style="left:56.7px;top:454.3px;font-size:14px;line-height:14px;color:#000000;letter-spacing:0.03px">Tipologias</div>
<div class="t" style="left:75.0px;top:472.3px;font-size:14px;line-height:14px;color:#000000;transform:scaleX(0.9597);transform-origin:0 0">CLIENTES</div>
<div class="t" style="left:76.0px;top:490.3px;font-size:14px;line-height:14px;color:#000000;transform:scaleX(0.9489);transform-origin:0 0">ACREEDORES POR GASTOS SUPLIDOS</div>
<div class="t" style="left:75.0px;top:508.3px;font-size:14px;line-height:14px;color:#000000;letter-spacing:-0.37px">PROVEEDORES</div>
<div class="t" style="left:75.0px;top:526.3px;font-size:14px;line-height:14px;color:#000000;transform:scaleX(0.9547);transform-origin:0 0">OTROS PROFESIONALES</div>
<div class="t" style="left:75.0px;top:544.3px;font-size:14px;line-height:14px;color:#000000;letter-spacing:-0.35px">CONTRARIOS/OTROS</div>
<div class="t" style="left:75.1px;top:562.3px;font-size:14px;line-height:14px;color:#000000;transform:scaleX(0.9472);transform-origin:0 0">CIRCULARES</div>
<div class="t" style="left:75.0px;top:580.3px;font-size:14px;line-height:14px;color:#000000;letter-spacing:-0.18px">OTROS</div>
<div class="t" style="left:696.3px;top:435.3px;font-size:15px;line-height:15px;color:#000000;font-weight:bold;font-style:italic;letter-spacing:-0.17px">Cognoms i nom</div>
<div class="t" style="left:875.0px;top:435.3px;font-size:15px;line-height:15px;color:#000000;font-weight:bold;letter-spacing:0.23px">Clau</div>
<div class="t" style="left:957.3px;top:435.3px;font-size:15px;line-height:15px;color:#000000;font-weight:bold;letter-spacing:0.20px">NIF</div>
<div class="t" style="left:1054.9px;top:435.3px;font-size:15px;line-height:15px;color:#000000;font-weight:bold;transform:scaleX(1.0643);transform-origin:0 0">E-Mail</div>
<div class="t" style="left:1160.7px;top:435.3px;font-size:15px;line-height:15px;color:#000000;font-weight:bold;transform:scaleX(1.0647);transform-origin:0 0">Telèfon</div>
<div class="t" style="left:1243.2px;top:435.3px;font-size:15px;line-height:15px;color:#000000;font-weight:bold;letter-spacing:0.15px">Mòbil</div>
<div class="t" style="left:1326.1px;top:435.3px;font-size:15px;line-height:15px;color:#000000;font-weight:bold;letter-spacing:0.25px">Fax</div>
<div class="t" style="left:1409.0px;top:435.3px;font-size:15px;line-height:15px;color:#000000;font-weight:bold;letter-spacing:-0.16px">Domicili</div>
<div class="t" style="left:1509.7px;top:435.3px;font-size:15px;line-height:15px;color:#000000;font-weight:bold;transform:scaleX(1.1760);transform-origin:0 0">C.P.</div>
<div class="t" style="left:1583.2px;top:435.3px;font-size:15px;line-height:15px;color:#000000;font-weight:bold;letter-spacing:0.14px">Població</div>
<div class="t" style="left:1756.7px;top:435.3px;font-size:15px;line-height:15px;color:#000000;font-weight:bold;letter-spacing:0.04px">Província</div>
<div class="t" style="left:718.3px;top:707.0px;font-size:15px;line-height:15px;color:#a0a0a0;font-weight:bold;letter-spacing:-0.10px">Empresa</div>
<div class="t" style="left:889.0px;top:707.0px;font-size:15px;line-height:15px;color:#a0a0a0;font-weight:bold;letter-spacing:0.05px">Divisió</div>
<div class="t" style="left:993.3px;top:707.0px;font-size:15px;line-height:15px;color:#a0a0a0;font-weight:bold;letter-spacing:0.14px">Departament</div>
<div class="t" style="left:1127.3px;top:707.0px;font-size:15px;line-height:15px;color:#a0a0a0;font-weight:bold;letter-spacing:0.23px">Clau</div>
<div class="t" style="left:1202.3px;top:707.0px;font-size:15px;line-height:15px;color:#a0a0a0;font-weight:bold;letter-spacing:0.20px">NIF</div>
<div class="t" style="left:1281.4px;top:707.0px;font-size:15px;line-height:15px;color:#a0a0a0;font-weight:bold;transform:scaleX(1.0786);transform-origin:0 0">E-Mail</div>
<div class="t" style="left:1378.0px;top:707.0px;font-size:15px;line-height:15px;color:#a0a0a0;font-weight:bold;transform:scaleX(1.0588);transform-origin:0 0">Telèfon</div>
<div class="t" style="left:1460.3px;top:707.0px;font-size:15px;line-height:15px;color:#a0a0a0;font-weight:bold;letter-spacing:0.23px">Mòbil</div>
<div class="t" style="left:749.3px;top:637.8px;font-size:15px;line-height:15px;color:#505050;transform:scaleX(1.0542);transform-origin:0 0">of 0</div>
<div class="t" style="left:749.3px;top:968.8px;font-size:15px;line-height:15px;color:#505050;transform:scaleX(1.0542);transform-origin:0 0">of 0</div>
<div class="t" style="left:682.6px;top:637.8px;font-size:15px;line-height:15px;color:#404040">0</div>
<div class="t" style="left:682.6px;top:968.8px;font-size:15px;line-height:15px;color:#404040">0</div>
<div class="t" style="left:2.3px;top:1010.3px;font-size:14px;line-height:14px;color:#ffffff;letter-spacing:-0.17px">GE-2023</div>
<div class="t" style="left:77.4px;top:1010.3px;font-size:14px;line-height:14px;color:#ffffff;transform:scaleX(0.8755);transform-origin:0 0">SBGESPRO EMPRESA DE EJEMPLO</div>
<div class="t" style="left:309.1px;top:1010.3px;font-size:14px;line-height:14px;color:#ffffff;transform:scaleX(0.9317);transform-origin:0 0">PROFESSIONAL 2023.02</div>
<div class="t" style="left:604.7px;top:1010.3px;font-size:14px;line-height:14px;color:#ffffff;transform:scaleX(0.9415);transform-origin:0 0">Factures</div>
<div class="t" style="left:687.1px;top:1010.3px;font-size:14px;line-height:14px;color:#ffffff;transform:scaleX(0.9578);transform-origin:0 0">P. Fons</div>
<div class="t" style="left:763.2px;top:1010.3px;font-size:14px;line-height:14px;color:#ffffff;letter-spacing:0.12px">Quotes</div>
<div class="t" style="left:840.1px;top:1010.3px;font-size:14px;line-height:14px;color:#ffffff;letter-spacing:-0.01px">Quotes G.V.</div>
<div class="t" style="left:946.8px;top:1010.3px;font-size:14px;line-height:14px;color:#ffffff;letter-spacing:-0.36px">Agenda</div>
<div class="t" style="left:1014.3px;top:1010.3px;font-size:14px;line-height:14px;color:#ffffff;transform:scaleX(0.9359);transform-origin:0 0">ADMINISTRADOR</div>
<div class="t" style="left:1664.0px;top:1010.3px;font-size:14px;line-height:14px;color:#d9aeb0;transform:scaleX(0.9511);transform-origin:0 0">Procés en curs</div>
<div class="t" style="left:446.5px;top:664.8px;font-size:15px;line-height:15px;color:#dfe1e4;letter-spacing:-0.21px">Recorte de ventana</div>
<div class="a" style="left:413px;top:660px;width:287px;height:24px;background:rgba(200,225,250,0.1)"></div>
</body></html>
